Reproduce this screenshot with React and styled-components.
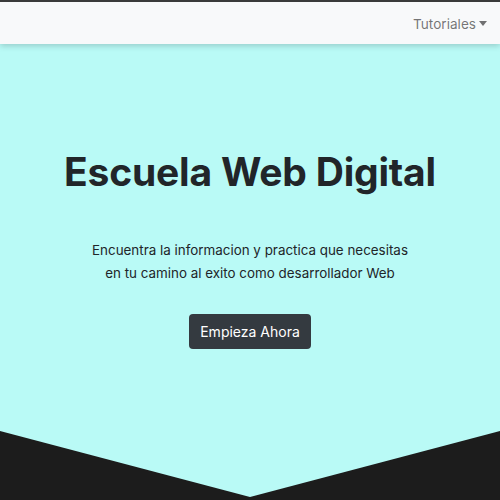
import styled, { createGlobalStyle } from 'styled-components';

const GlobalStyle = createGlobalStyle`
  body {
    margin: 0;
    font-family: Inter, "Noto Sans", sans-serif;
    background: #2a2a2a;
  }
`;

const App = () => {
  return (
    <>
      <GlobalStyle />
      <StyledNav>
        <StyledNavLink>
          Tutoriales <StyledCaret />
        </StyledNavLink>
      </StyledNav>
      <StyledWrap>
        <StyledHero>
          <h1>Escuela Web Digital</h1>
          <p>
            Encuentra la informacion y practica que necesitas
            <br />
            en tu camino al exito como desarrollador Web
          </p>
          <StyledButton>Empieza Ahora</StyledButton>
        </StyledHero>
      </StyledWrap>
    </>
  );
};

//styled-components
const StyledNav = styled.nav`
  position: relative;
  z-index: 2;
  height: 42px;
  border-top: 2px solid #3a3a3a;
  background: #f8f9fa;
  display: flex;
  align-items: center;
  justify-content: flex-end;
  padding-right: 13px;
  box-shadow: 0 2px 6px rgba(0, 0, 0, 0.18);
`;

const StyledNavLink = styled.a`
  color: rgba(0, 0, 0, 0.55);
  font-size: 13.6px;
  display: flex;
  align-items: center;
  gap: 3px;
  margin-top: 2px;
`;

const StyledCaret = styled.span`
  width: 0;
  height: 0;
  border-left: 4.5px solid transparent;
  border-right: 4.5px solid transparent;
  border-top: 5px solid rgba(0, 0, 0, 0.55);
  margin-top: -2px;
`;

const StyledWrap = styled.div`
  background: #1c1c1c;
  padding-bottom: 3px;
`;

const StyledHero = styled.section`
  height: 453px;
  background: #b9faf6;
  clip-path: polygon(0 0, 100% 0, 100% 387px, 50% 100%, 0 387px);
  display: flex;
  flex-direction: column;
  align-items: center;
  color: #212529;
  text-align: center;
  h1 {
    margin: 105px 0 0;
    font-size: 39px;
    font-weight: 700;
    letter-spacing: -0.2px;
    line-height: 1.2;
  }
  p {
    margin: 43px 0 0;
    font-size: 13.4px;
    line-height: 23px;
  }
`;

const StyledButton = styled.button`
  margin-top: 29px;
  background: #343a40;
  color: #fff;
  border: none;
  border-radius: 4px;
  font-family: Inter, "Noto Sans", sans-serif;
  font-size: 14px;
  white-space: nowrap;
  height: 35px;
  width: 122px;
`;

export default App;
